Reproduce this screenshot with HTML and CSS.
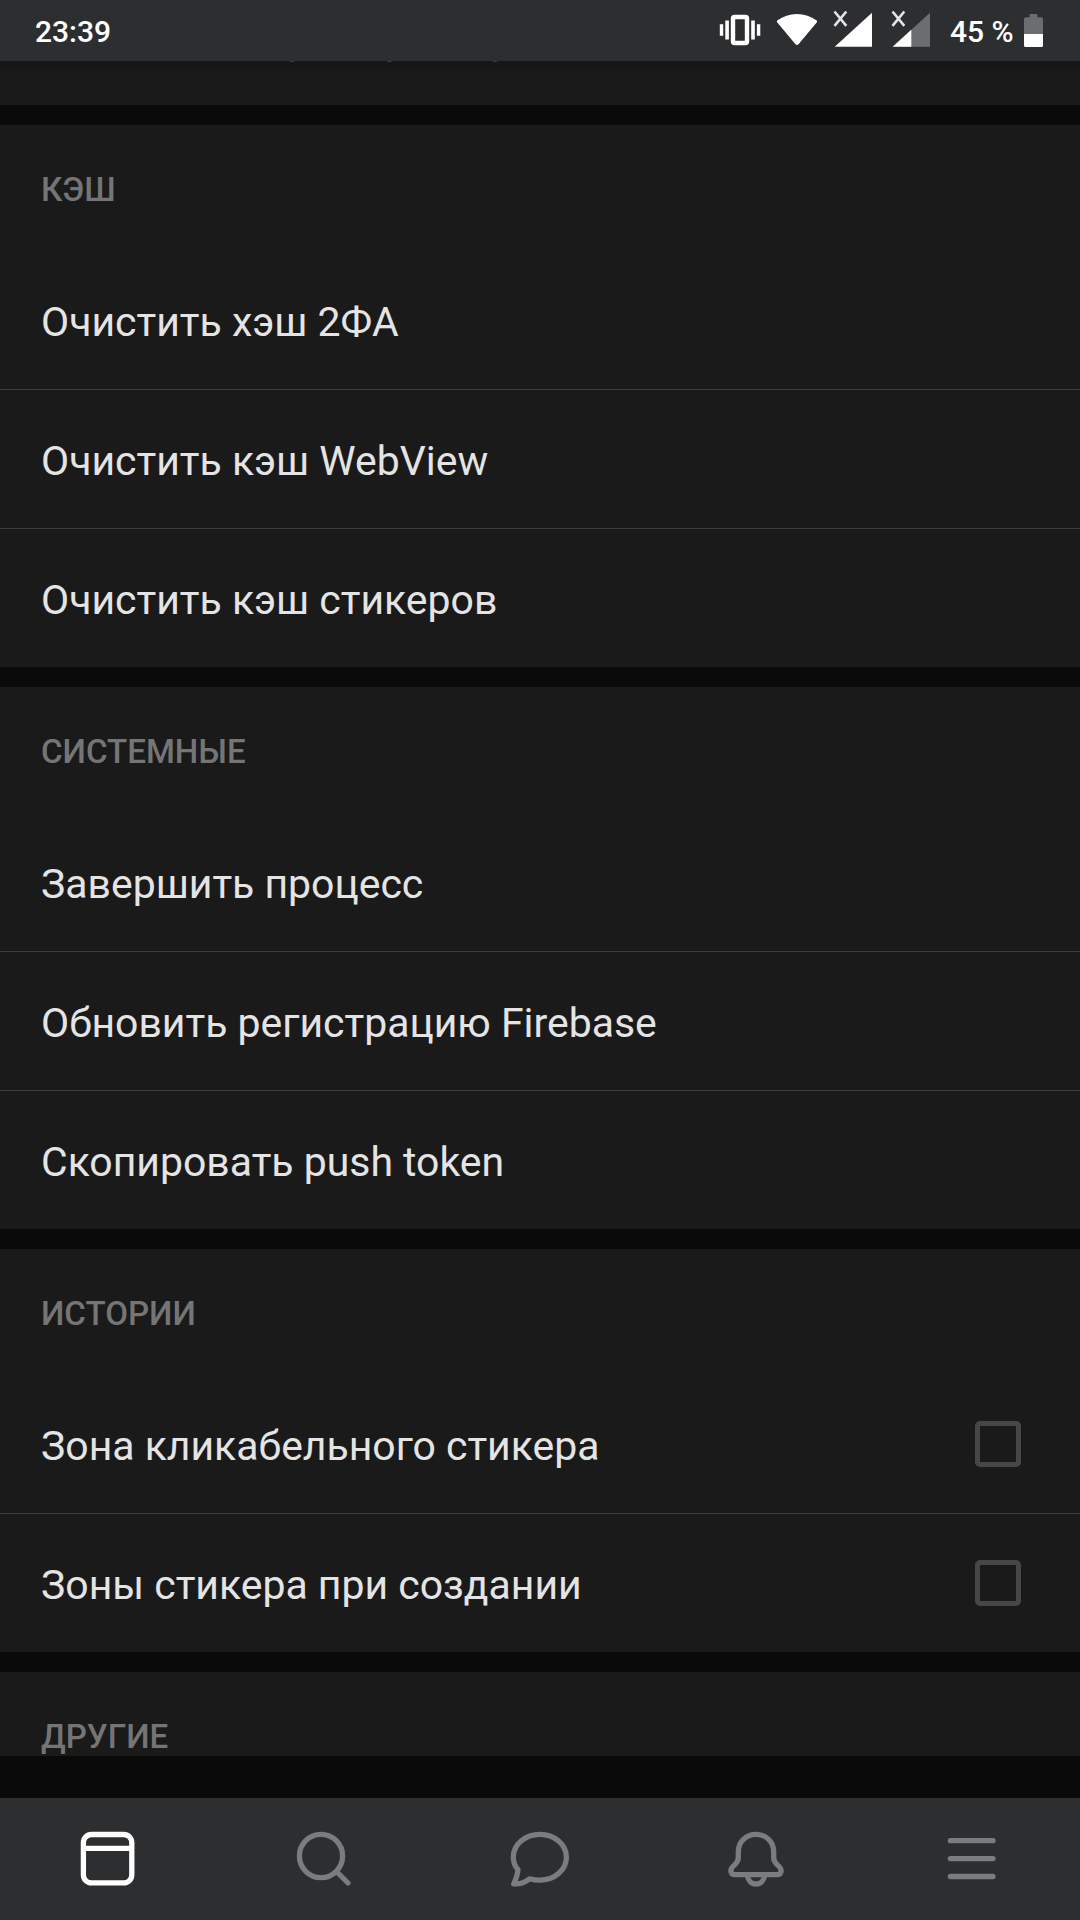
FILE: index.html
```html
<!DOCTYPE html>
<html lang="ru">
<head>
  <meta charset="UTF-8" />
  <meta name="viewport" content="width=device-width, initial-scale=1.0"/>
  <title>Настройки</title>
  <link rel="stylesheet" href="styles.css">
</head>
<body>
  <header class="status-bar">
    <span class="clock">23:39</span>
    <div class="status-icons">
      <svg class="vibrate" width="42" height="61" viewBox="0 0 42 61">
        <rect x="14" y="17" width="14" height="26" rx="1.5" fill="none" stroke="#fff" stroke-width="4.4"/>
        <path d="M6.3 20.5h3.6v19H6.3zM.8 24.3h3.4v11.4H.8zM32.2 20.5h3.6v19h-3.6zM37.9 24.3h3.4v11.4h-3.4z" fill="#fff"/>
      </svg>
      <svg class="wifi" width="42" height="61" viewBox="0 0 42 61">
        <path d="M1.6 20.3C7 16.3 13.5 14 21 14s14 2.3 19.4 6.3c.8.6.9 1.5.3 2.3L22.5 44.2c-.9 1-2.1 1-3 0L1.3 22.6c-.6-.8-.5-1.7.3-2.3z" fill="#fff"/>
      </svg>
      <svg class="signal" width="40" height="61" viewBox="0 0 40 61">
        <path d="M39 12.7v34H1.7z" fill="#fff"/>
        <path d="M1.5 11.5l11.8 14.4M13.3 11.5L1.5 25.9" stroke="#e4e4e4" stroke-width="2.6"/>
      </svg>
      <svg class="signal" width="40" height="61" viewBox="0 0 40 61">
        <path d="M39 12.7v34H1.7z" fill="#6c6d6f"/>
        <path d="M20.3 29.8v16.9H1.7z" fill="#fff"/>
        <path d="M1.5 11.5l11.8 14.4M13.3 11.5L1.5 25.9" stroke="#e4e4e4" stroke-width="2.6"/>
      </svg>
      <span class="percent">45 %</span>
      <svg class="battery" width="20" height="61" viewBox="0 0 20 61">
        <path d="M5.7 14h7.6v3.3H17a2 2 0 0 1 2 2V34H0V19.3a2 2 0 0 1 2-2h3.7z" fill="#6c6d6f"/>
        <path d="M0 34h19v11.5a1.5 1.5 0 0 1-1.5 1.5h-16A1.5 1.5 0 0 1 0 45.5z" fill="#fff"/>
      </svg>
    </div>
  </header>

  <main class="settings">
    <section class="section section-cut">
      <!-- хвосты букв строки, ушедшей под статус-бар -->
      <svg width="540" height="2" viewBox="0 0 540 2">
        <path d="M289 0h6l-2 1h-2zM387 0h5l-1 1h-3zM492 0h6l-2 1h-2z" fill="#404040"/>
      </svg>
    </section>

    <section class="section">
      <h2>КЭШ</h2>
      <div class="row">Очистить хэш 2ФА</div>
      <div class="row">Очистить кэш WebView</div>
      <div class="row">Очистить кэш стикеров</div>
    </section>

    <section class="section">
      <h2>СИСТЕМНЫЕ</h2>
      <div class="row">Завершить процесс</div>
      <div class="row">Обновить регистрацию Firebase</div>
      <div class="row">Скопировать push token</div>
    </section>

    <section class="section">
      <h2>ИСТОРИИ</h2>
      <div class="row">Зона кликабельного стикера <span class="checkbox"></span></div>
      <div class="row">Зоны стикера при создании <span class="checkbox"></span></div>
    </section>

    <section class="section section-last">
      <h2>ДРУГИЕ</h2>
    </section>
  </main>

  <nav class="tabs">
    <a href="#" class="active">
      <svg viewBox="0 0 72 72">
        <rect x="11.4" y="11.5" width="48.4" height="48.4" rx="8"/>
        <path d="M11.4 25.4h48.4" stroke-linecap="butt"/>
      </svg>
    </a>
    <a href="#">
      <svg viewBox="0 0 72 72">
        <circle cx="33" cy="33" r="21.6"/>
        <path d="M49 49l11 11"/>
      </svg>
    </a>
    <a href="#">
      <svg viewBox="0 0 72 72">
        <path d="M25.5 55.8C28.5 56.7 32 57.2 36 57.2C51 57.2 62.4 46.5 62.4 34.2C62.4 21.5 50.5 11.4 36 11.4C21 11.4 9.3 21.5 9.3 34.2C9.3 39 10.8 43 14 46.8C13.6 51 12 56 9.8 60.8C16 61.4 21 59.3 25.5 55.8Z"/>
      </svg>
    </a>
    <a href="#">
      <svg viewBox="0 0 72 72">
        <path d="M36 11.3C26 11.3 18.3 19 18.3 29V35C18.3 38 17 39.5 15 41.5L12.5 44C9.5 47.5 11 51.7 15 51.7H57C61 51.7 62.5 47.5 59.5 44L57 41.5C55 39.5 53.7 38 53.7 35V29C53.7 19 46 11.3 36 11.3Z"/>
        <path d="M27.3 52C28 57.5 31.5 61 36 61S44 57.5 44.7 52"/>
      </svg>
    </a>
    <a href="#">
      <svg viewBox="0 0 72 72">
        <path d="M14.4 17.7h42.6M14.4 35.6h42.6M14.4 53.5h42.6"/>
      </svg>
    </a>
  </nav>
</body>
</html>
```

FILE: styles.css
```css
* {
  box-sizing: border-box;
  margin: 0;
  padding: 0;
}

body {
  font-family: Roboto, sans-serif;
  background-color: #0a0a0a;
  width: 1080px;
  height: 1920px;
  overflow: hidden;
  display: flex;
  flex-direction: column;
}

.status-bar {
  height: 61px;
  flex-shrink: 0;
  display: flex;
  justify-content: space-between;
  padding: 0 36px 0 35px;
  background-color: #2d2e30;
  color: #fff;
  font-size: 30px;
  font-weight: 500;
  line-height: 63px;
}

.status-icons {
  display: flex;
}

.vibrate,
.wifi {
  margin-right: 15px;
}

.signal {
  margin-right: 18px;
}

.percent {
  width: 64px;
  margin-left: 1px;
  margin-right: 10px;
  white-space: nowrap;
}

.settings {
  height: 1695px;
  flex-shrink: 0;
  overflow: hidden;
  display: flex;
  flex-direction: column;
  gap: 20px;
}

.section {
  flex-shrink: 0;
  background-color: #1a1a1a;
}

.section-cut {
  height: 44px;
  background-image: linear-gradient(#151617, #1a1a1a 16px);
}

.section-cut svg {
  display: block;
}

.section-last {
  height: 84px;
}

h2 {
  height: 126px;
  padding: 45px 41px 0;
  font-size: 33.1px;
  font-weight: 500;
  line-height: 40px;
  color: #757575;
}

.row {
  height: 139px;
  display: flex;
  justify-content: space-between;
  align-items: center;
  padding: 4px 59px 0 41px;
  border-bottom: 1px solid #3b3b3b;
  font-size: 40.95px;
  line-height: 51px;
  color: #e4e4e4;
}

.row:last-child {
  height: 138px;
  border-bottom: none;
}

.checkbox {
  width: 46px;
  height: 46px;
  margin-bottom: 4px;
  border: 5px solid #474747;
  border-radius: 5px;
}

.tabs {
  height: 122px;
  margin-top: auto;
  flex-shrink: 0;
  display: flex;
  background-color: #2d2e30;
}

.tabs a {
  flex: 1;
  display: flex;
  justify-content: center;
  align-items: center;
  color: #7b7c7e;
}

.tabs a.active {
  color: #fff;
}

.tabs svg {
  width: 72px;
  height: 72px;
  fill: none;
  stroke: currentColor;
  stroke-width: 5.3;
  stroke-linecap: round;
  stroke-linejoin: round;
}
```
